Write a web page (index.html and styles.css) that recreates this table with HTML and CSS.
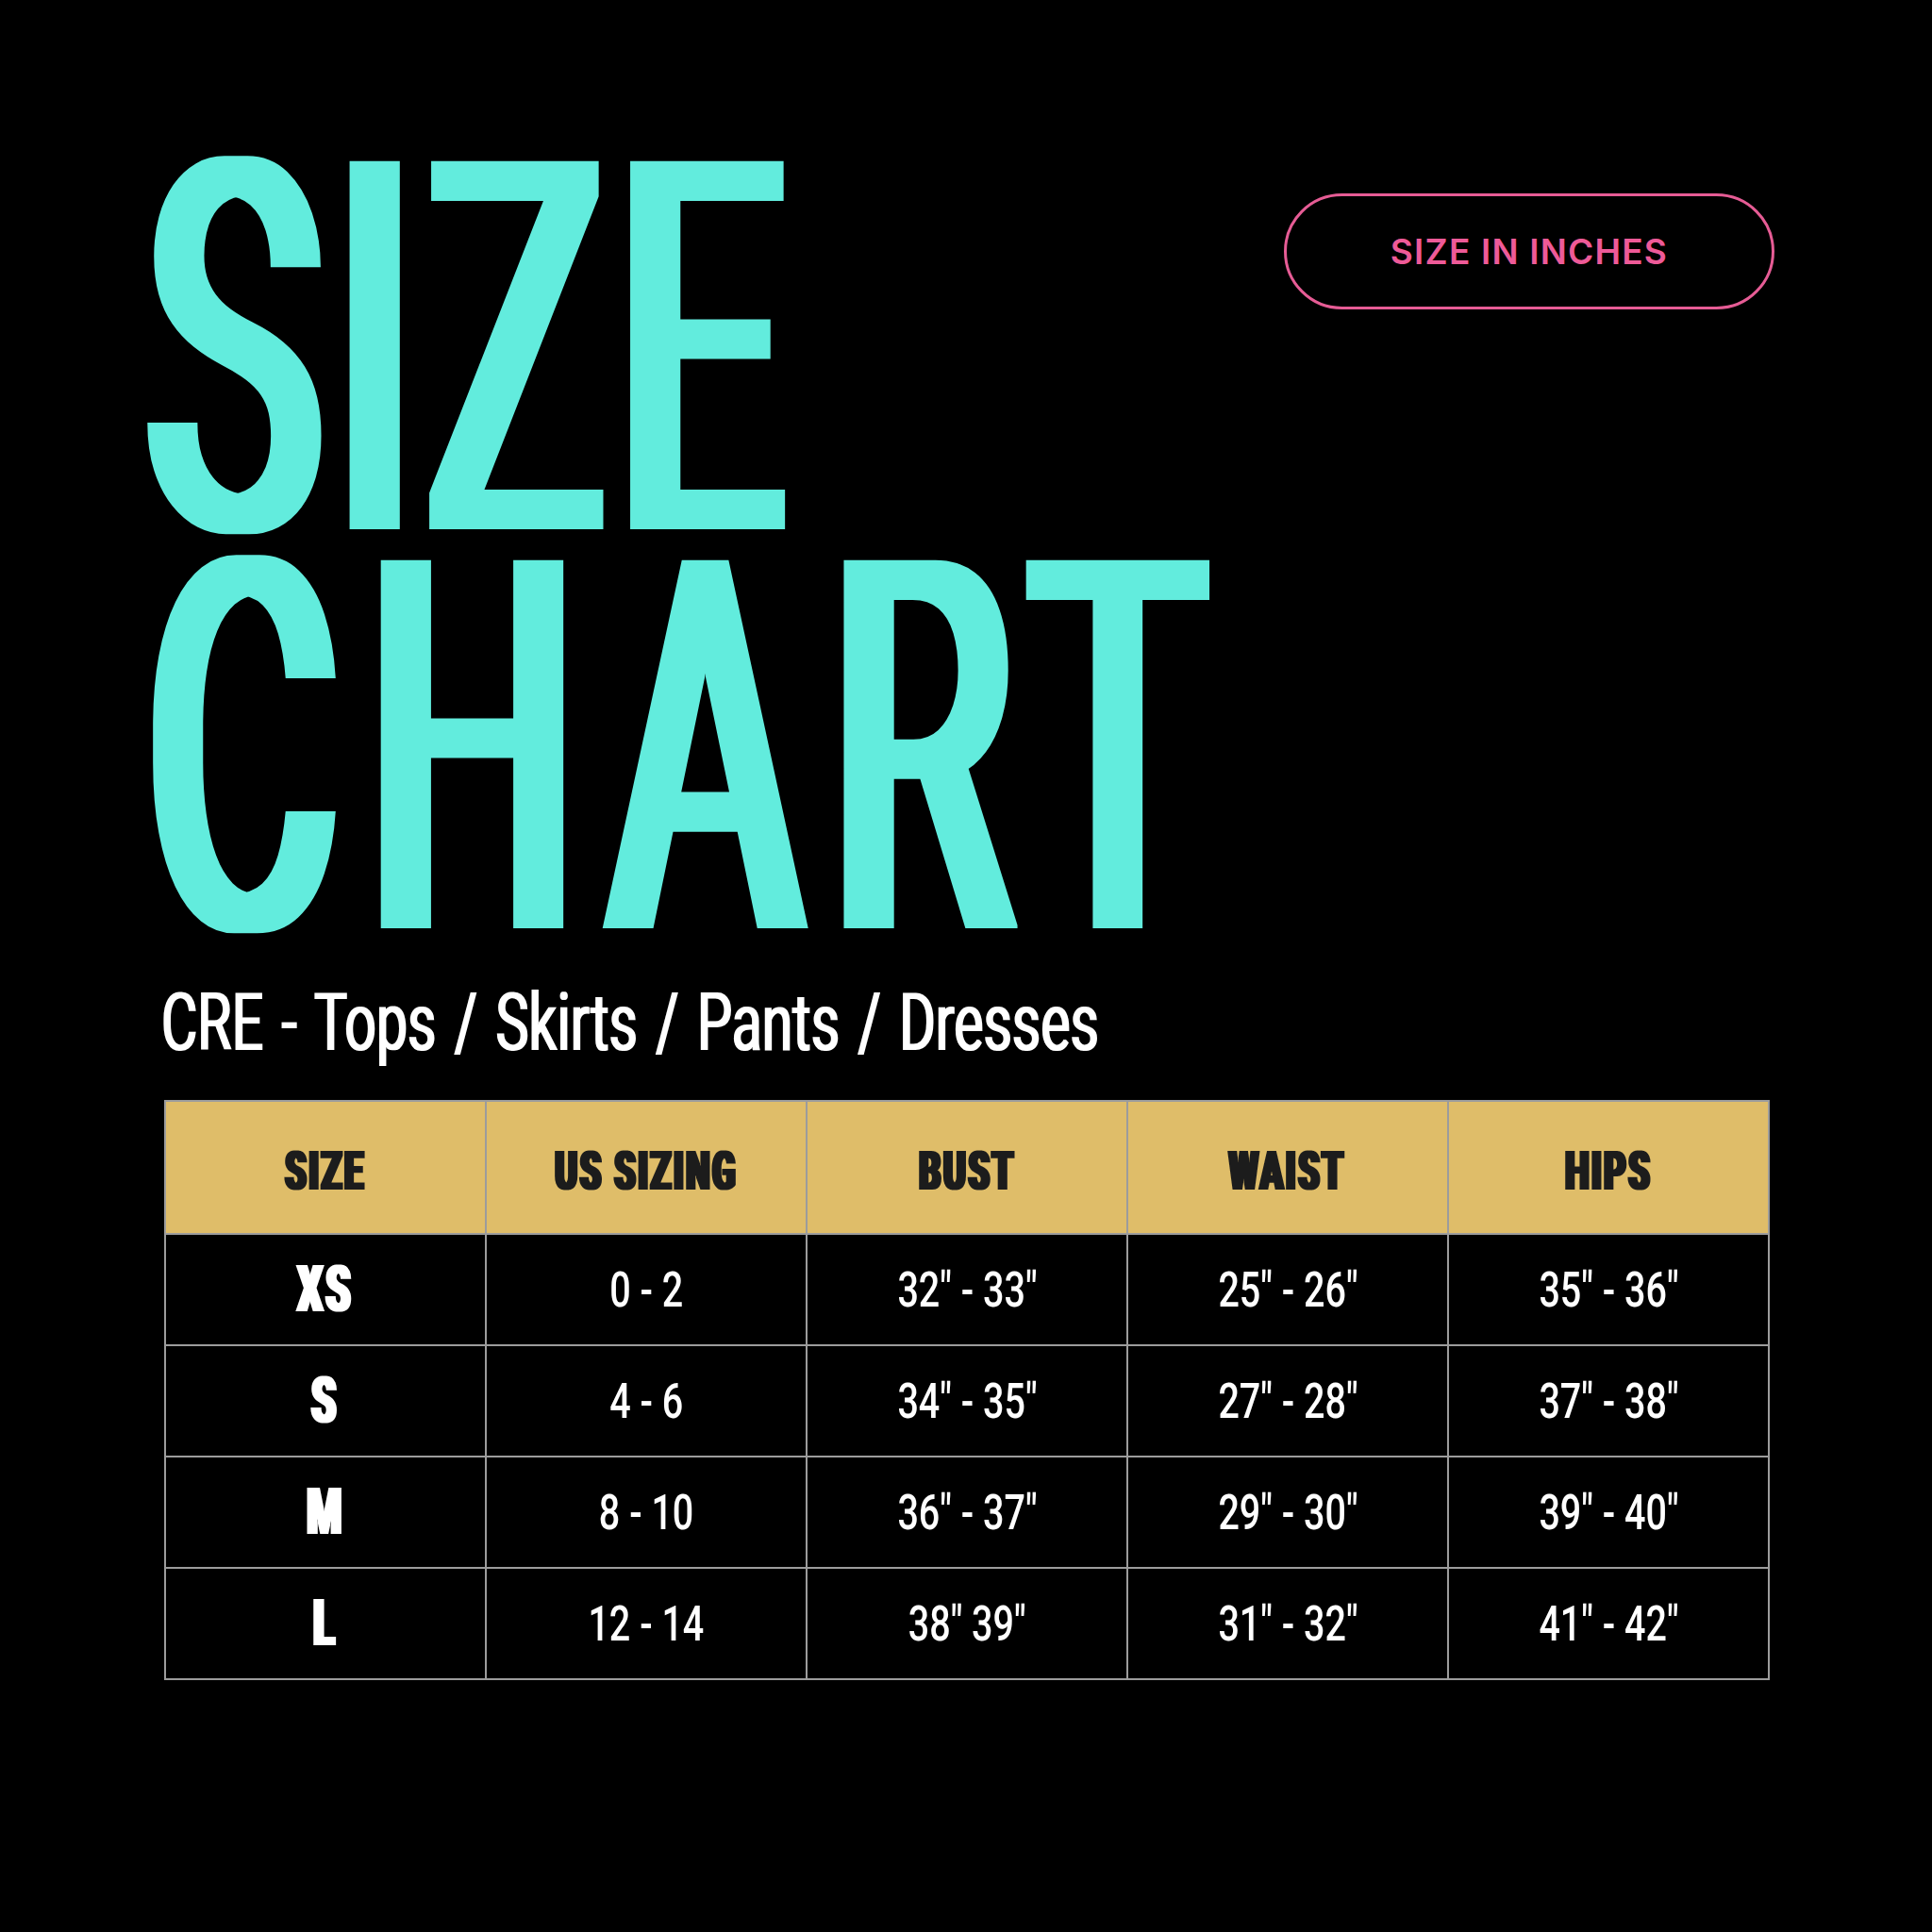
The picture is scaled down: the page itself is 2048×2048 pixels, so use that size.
FILE: index.html
```html
<!DOCTYPE html>
<html lang="en">
<head>
<meta charset="utf-8">
<title>Size Chart</title>
<link rel="stylesheet" href="styles.css">
</head>
<body>
<main class="page">
  <header class="top">
    <h1 class="title">
      <span class="title-line title-line--size">SIZE</span>
      <span class="title-line title-line--chart">CHART</span>
    </h1>
    <div class="badge">SIZE IN INCHES</div>
  </header>
  <p class="subtitle"><span class="subtitle-text">CRE - Tops / Skirts / Pants / Dresses</span></p>
  <table class="chart">
    <thead>
      <tr>
        <th><span class="head-text">SIZE</span></th>
        <th><span class="head-text">US SIZING</span></th>
        <th><span class="head-text">BUST</span></th>
        <th><span class="head-text">WAIST</span></th>
        <th><span class="head-text">HIPS</span></th>
      </tr>
    </thead>
    <tbody>
      <tr>
        <td><span class="size-text">XS</span></td>
        <td><span class="num-text">0 - 2</span></td>
        <td><span class="num-text">32″ - 33″</span></td>
        <td><span class="num-text">25″ - 26″</span></td>
        <td><span class="num-text">35″ - 36″</span></td>
      </tr>
      <tr>
        <td><span class="size-text">S</span></td>
        <td><span class="num-text">4 - 6</span></td>
        <td><span class="num-text">34″ - 35″</span></td>
        <td><span class="num-text">27″ - 28″</span></td>
        <td><span class="num-text">37″ - 38″</span></td>
      </tr>
      <tr>
        <td><span class="size-text">M</span></td>
        <td><span class="num-text">8 - 10</span></td>
        <td><span class="num-text">36″ - 37″</span></td>
        <td><span class="num-text">29″ - 30″</span></td>
        <td><span class="num-text">39″ - 40″</span></td>
      </tr>
      <tr>
        <td><span class="size-text">L</span></td>
        <td><span class="num-text">12 - 14</span></td>
        <td><span class="num-text">38″ 39″</span></td>
        <td><span class="num-text">31″ - 32″</span></td>
        <td><span class="num-text">41″ - 42″</span></td>
      </tr>
    </tbody>
  </table>
</main>
<svg class="defs" width="0" height="0" aria-hidden="true">
  <filter id="dilate-title" x="-5%" y="-5%" width="110%" height="110%">
    <feMorphology operator="dilate" radius="21 0"/>
  </filter>
  <filter id="dilate-sub" x="-5%" y="-10%" width="110%" height="120%">
    <feMorphology operator="dilate" radius="1 0"/>
  </filter>
  <filter id="dilate-head" x="-10%" y="-10%" width="120%" height="120%">
    <feMorphology operator="dilate" radius="3 0"/>
  </filter>
  <filter id="dilate-size" x="-20%" y="-10%" width="140%" height="120%">
    <feMorphology operator="dilate" radius="3 0"/>
  </filter>
</svg>
</body>
</html>
```

FILE: styles.css
```css
* {
  box-sizing: border-box;
}

html,
body {
  margin: 0;
  background: #000;
}

body {
  width: 2048px;
  height: 2048px;
  overflow: hidden;
}

.page {
  padding: 162px 167px 0 174px;
  font-family: Roboto, "Liberation Sans", Arial, sans-serif;
  color: #fff;
}

.top {
  display: grid;
  grid-template-columns: minmax(0, 1fr) auto;
  align-items: start;
}

.title {
  margin: 0 0 0 -18px;
  display: flex;
  flex-direction: column;
  align-items: flex-start;
  font-weight: 400;
  font-size: 549px;
  line-height: 423px;
  color: #62ecdd;
}

.title-line {
  display: inline-block;
  white-space: nowrap;
  transform: scaleX(0.565);
  transform-origin: 0 0;
  filter: url(#dilate-title);
}

.title-line--size {
  letter-spacing: 26px;
}

.title-line--chart {
  letter-spacing: 57px;
}

.badge {
  margin-top: 43px;
  width: 520px;
  height: 123px;
  border: 3px solid #e65c95;
  border-radius: 62px;
  display: flex;
  align-items: center;
  justify-content: center;
  font-family: Inter, "Liberation Sans", sans-serif;
  font-weight: 600;
  font-size: 37px;
  letter-spacing: 1.2px;
  color: #ee5a98;
}

.subtitle {
  margin: 26px 0 0 -3px;
  font-size: 86px;
  line-height: 100px;
  font-weight: 400;
}

.subtitle-text {
  display: inline-block;
  white-space: nowrap;
  word-spacing: 7px;
  transform: scaleX(0.685);
  transform-origin: 0 0;
  filter: url(#dilate-sub);
}

.chart {
  margin-top: 32px;
  width: 1702px;
  border-collapse: collapse;
  table-layout: fixed;
}

.chart th,
.chart td {
  border: 2px solid #9c9c9c;
  text-align: center;
  vertical-align: middle;
  padding: 0;
  white-space: nowrap;
}

.chart th {
  background: #dfbd69;
  height: 141px;
  padding-top: 6px;
  color: #1f1f1f;
  font-weight: 900;
  font-size: 58px;
}

.chart td {
  height: 118px;
  background: #000;
}

.head-text {
  display: inline-block;
  letter-spacing: 4px;
  transform: scaleX(0.62);
  filter: url(#dilate-head);
}

.size-text {
  display: inline-block;
  font-size: 68px;
  font-weight: 900;
  letter-spacing: 5px;
  transform: scaleX(0.62);
  filter: url(#dilate-size);
}

.num-text {
  display: inline-block;
  font-size: 52px;
  font-weight: 500;
  transform: scaleX(0.76);
}

.defs {
  display: block;
  width: 0;
  height: 0;
  overflow: hidden;
}
```
